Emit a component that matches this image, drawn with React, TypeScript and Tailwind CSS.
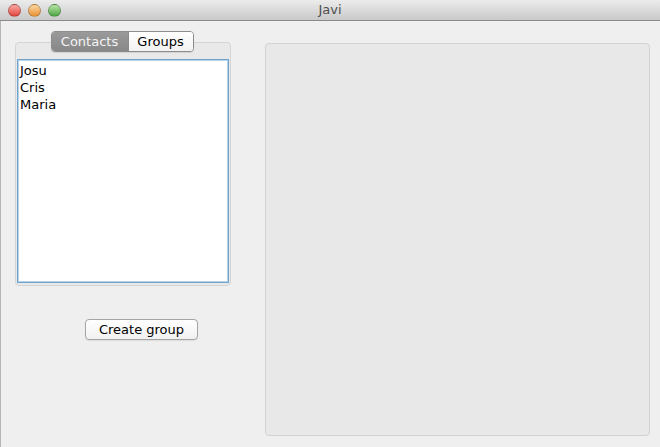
const contacts = ["Josu", "Cris", "Maria"];

function TrafficLight({ color }: { color: string }) {
  return (
    <div
      className={`h-[13px] w-[13px] rounded-full border border-black/25 ${color}`}
    />
  );
}

export default function App() {
  return (
    <div
      className="flex h-[447px] w-[660px] flex-col overflow-hidden bg-[#efefef] text-[13px] text-black"
      style={{ fontFamily: '"Lucida Grande", "DejaVu Sans", sans-serif' }}
    >
      {/* title bar */}
      <div className="relative flex h-[21px] items-center border-b border-[#8a8a8a] bg-gradient-to-b from-[#ececec] to-[#c9c9c9] px-[8px]">
        <div className="flex gap-[7px]">
          <TrafficLight color="bg-gradient-to-b from-[#f9a8a5] to-[#e0413b]" />
          <TrafficLight color="bg-gradient-to-b from-[#fbd7a0] to-[#e9922c]" />
          <TrafficLight color="bg-gradient-to-b from-[#b8e6a8] to-[#4ba53f]" />
        </div>
        <div className="absolute inset-0 flex items-center justify-center text-[13px] text-[#4d4d4d]">
          Javi
        </div>
      </div>

      <div className="flex flex-1 border-l border-[#b5b5b5] pl-[14px] pr-[10px]">
        {/* left column */}
        <div className="flex w-[216px] flex-col">
          <div className="relative z-10 mt-[10px] flex justify-center pr-[2px]">
            <div className="flex h-[21px] overflow-hidden rounded-[4px] border border-[#8c8c8c] shadow-[0_1px_1px_rgba(0,0,0,0.1)]">
              <div className="flex w-[76px] items-center justify-center bg-gradient-to-b from-[#9a9a9a] to-[#888888] text-[#f4f4f4]">
                Contacts
              </div>
              <div className="flex w-[65px] items-center justify-center border-l border-[#8c8c8c] bg-gradient-to-b from-white to-[#f2f2f2]">
                Groups
              </div>
            </div>
          </div>
          <div className="-mt-[10px] h-[244px] rounded-[4px] border border-[#d4d4d4] bg-[#e9e9e9] px-[1px] pt-[16px] pb-[2px]">
            <div className="h-full border border-[#6da3cc] bg-white px-[2px] pt-[2px] shadow-[inset_0_0_0_1px_#b9d4e8]">
              {contacts.map((c) => (
                <div key={c} className="h-[17px] leading-[17px]">
                  {c}
                </div>
              ))}
            </div>
          </div>
          <div className="mt-[33px] flex pl-[70px]">
            <button className="h-[21px] w-[113px] rounded-[4px] border border-[#a4a4a4] bg-gradient-to-b from-white to-[#f1f1f1] shadow-[0_1px_1px_rgba(0,0,0,0.08)]">
              Create group
            </button>
          </div>
        </div>

        {/* right panel */}
        <div className="ml-[34px] mt-[22px] h-[393px] flex-1 rounded-[4px] border border-[#d2d2d2] bg-[#e8e8e8]" />
      </div>
    </div>
  );
}
